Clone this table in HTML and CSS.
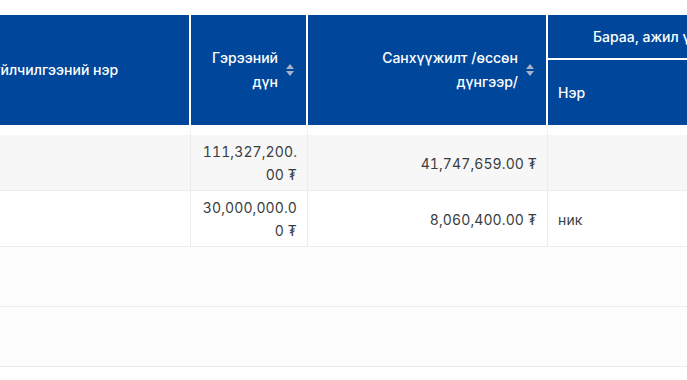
FILE: index.html
```html
<!DOCTYPE html>
<html lang="mn">
<head>
<meta charset="utf-8">
<title>Гэрээ</title>
<link rel="stylesheet" href="styles.css">
</head>
<body>
<div class="viewport">
  <table class="grid">
    <colgroup>
      <col class="c-name">
      <col class="c-amount">
      <col class="c-fund">
      <col class="c-item">
      <col class="c-qty">
      <col class="c-price">
    </colgroup>
    <thead>
      <tr class="row-group">
        <th rowspan="2" class="h-left">Бараа, ажил үйлчилгээний нэр</th>
        <th rowspan="2" class="h-sort">
          <div class="sort-wrap">
            <span class="h-text">Гэрээний дүн</span>
            <span class="sorter"><i class="up"></i><i class="down"></i></span>
          </div>
        </th>
        <th rowspan="2" class="h-sort">
          <div class="sort-wrap">
            <span class="h-text">Санхүүжилт /өссөн дүнгээр/</span>
            <span class="sorter"><i class="up"></i><i class="down"></i></span>
          </div>
        </th>
        <th colspan="3" class="h-group">Бараа, ажил үйлчилгээ</th>
      </tr>
      <tr class="row-sub">
        <th class="h-left">Нэр</th>
        <th class="h-left">Тоо хэмжээ</th>
        <th class="h-left">Нэгж үнэ</th>
      </tr>
    </thead>
    <tbody>
      <tr class="row-data striped first">
        <td></td>
        <td class="num wrap">111,327,200.00 ₮</td>
        <td class="num">41,747,659.00 ₮</td>
        <td></td>
        <td></td>
        <td></td>
      </tr>
      <tr class="row-data">
        <td></td>
        <td class="num wrap">30,000,000.00 ₮</td>
        <td class="num">8,060,400.00 ₮</td>
        <td>ник</td>
        <td></td>
        <td></td>
      </tr>
      <tr class="row-empty"><td colspan="6"></td></tr>
      <tr class="row-empty"><td colspan="6"></td></tr>
    </tbody>
  </table>
</div>
</body>
</html>
```
FILE: styles.css
```css
html, body {
  margin: 0;
  padding: 0;
  background: #ffffff;
}

body {
  font-family: Inter, "Noto Sans", "Liberation Sans", sans-serif;
  font-size: 14px;
  color: #343a40;
}

.viewport {
  width: 687px;
  height: 380px;
  overflow: hidden;
  padding-top: 15px;
  box-sizing: border-box;
}

.grid {
  table-layout: fixed;
  border-collapse: separate;
  border-spacing: 0;
  width: 1059px;
  margin-left: -107px;
}

.c-name { width: 298px; }
.c-amount { width: 117px; }
.c-fund { width: 240px; }
.c-item { width: 204px; }
.c-qty { width: 100px; }
.c-price { width: 100px; }

thead th {
  background: #00479b;
  color: #ffffff;
  font-weight: 500;
  font-size: 14px;
  line-height: 24px;
  border-right: 2px solid #ffffff;
  vertical-align: middle;
  padding: 0 10px;
}

.row-group { height: 45px; }
.row-sub { height: 65px; }

.h-left { text-align: left; }

.h-group {
  text-align: left;
  padding-left: 45px;
  border-bottom: 2px solid #ffffff;
}

.h-sort { padding-right: 12px; }

.sort-wrap {
  display: flex;
  align-items: center;
  justify-content: flex-end;
  gap: 8px;
}

.h-text {
  text-align: right;
}

.sorter {
  display: flex;
  flex-direction: column;
  gap: 2px;
  flex: none;
}

.sorter i {
  display: block;
  width: 0;
  height: 0;
  border-left: 4px solid transparent;
  border-right: 4px solid transparent;
}

.sorter .up { border-bottom: 5px solid #a8b3c6; }
.sorter .down { border-top: 5px solid #a8b3c6; }

tbody td {
  line-height: 23px;
  padding: 5px 10px 4px;
  border-bottom: 1px solid #ececec;
  border-right: 1px solid #ececec;
  vertical-align: middle;
  color: #3a3d42;
}

.row-data td {
  letter-spacing: 0.1px;
  font-variant-numeric: tabular-nums;
}

.row-data.first td { border-top: 10px solid #ffffff; }

.striped td { background: #f7f7f7; }

.num { text-align: right; }

.wrap {
  word-break: break-all;
  padding-left: 6px;
}

.row-empty td {
  height: 59px;
  padding: 0;
  border-right: none;
  background: #fdfdfd;
}
```
